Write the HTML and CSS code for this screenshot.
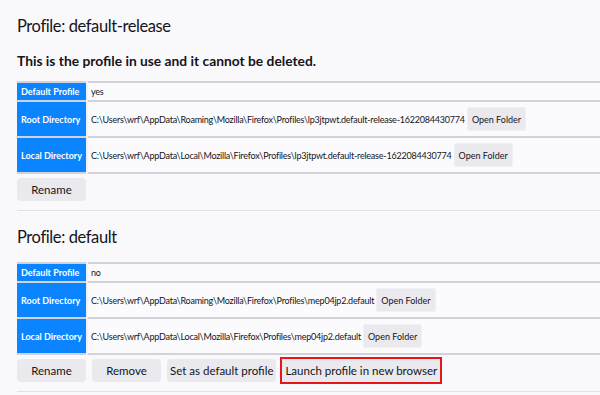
FILE: index.html
```html
<!DOCTYPE html>
<html lang="en">
<head>
  <meta charset="UTF-8">
  <title>About Profiles</title>
  <link rel="stylesheet" href="styles.css">
</head>
<body>
  <div class="profiles">
    <div class="profile">
      <h2>Profile: default-release</h2>
      <h3>This is the profile in use and it cannot be deleted.</h3>
      <table>
        <tr>
          <th>Default Profile</th>
          <td>yes</td>
        </tr>
        <tr class="dir-row">
          <th>Root Directory</th>
          <td>C:\Users\wrf\AppData\Roaming\Mozilla\Firefox\Profiles\lp3jtpwt.default-release-1622084430774 <button class="folder-button">Open Folder</button></td>
        </tr>
        <tr class="dir-row">
          <th>Local Directory</th>
          <td>C:\Users\wrf\AppData\Local\Mozilla\Firefox\Profiles\lp3jtpwt.default-release-1622084430774 <button class="folder-button">Open Folder</button></td>
        </tr>
      </table>
      <div class="actions">
        <button>Rename</button>
      </div>
    </div>
    <div class="profile">
      <h2>Profile: default</h2>
      <table>
        <tr>
          <th>Default Profile</th>
          <td>no</td>
        </tr>
        <tr class="dir-row">
          <th>Root Directory</th>
          <td>C:\Users\wrf\AppData\Roaming\Mozilla\Firefox\Profiles\mep04jp2.default <button class="folder-button">Open Folder</button></td>
        </tr>
        <tr class="dir-row">
          <th>Local Directory</th>
          <td>C:\Users\wrf\AppData\Local\Mozilla\Firefox\Profiles\mep04jp2.default <button class="folder-button">Open Folder</button></td>
        </tr>
      </table>
      <div class="actions">
        <button>Rename</button>
        <button>Remove</button>
        <button>Set as default profile</button>
        <button class="marked">Launch profile in new browser</button>
      </div>
    </div>
  </div>
</body>
</html>
```

FILE: styles.css
```css
html {
  overflow: hidden;
}
body {
  margin: 0;
  padding: 0 0 0 17px;
  background-color: #f9f9fb;
  color: #15141a;
  font-family: Lato, "Open Sans", sans-serif;
}
.profiles {
  width: 640px;
}
.profile {
  padding-top: 14px;
  padding-bottom: 9px;
  border-bottom: 1px solid #e0e0e6;
}
h2 {
  margin: 0 0 13px;
  font-size: 16.5px;
  font-weight: 400;
  letter-spacing: -0.4px;
  line-height: 24px;
}
h3 {
  margin: 0 0 10px;
  font-size: 13.8px;
  font-weight: 700;
  line-height: 20px;
}
table {
  width: 100%;
  border-collapse: collapse;
  border-top: 2px solid #d2d2d8;
  border-bottom: 2px solid #d2d2d8;
  font-size: 9px;
}
th, td {
  border-top: 2px solid #d2d2d8;
  line-height: 13px;
  padding: 2px 3px;
}
th {
  width: 1px;
  padding: 2px 4px;
  border-right: 2px solid #f0f0f8;
  background-color: #0a84ff;
  color: #fff;
  font-size: 9px;
  font-weight: 700;
  text-align: left;
  white-space: nowrap;
}
td {
  padding-left: 3px;
  background-color: #fbfbfe;
  letter-spacing: -0.22px;
  white-space: nowrap;
}
.dir-row td {
  padding-top: 5px;
  padding-bottom: 5px;
}
button {
  min-width: 69px;
  height: 23px;
  margin: 0;
  padding: 0 3px;
  border: none;
  border-radius: 4px;
  background-color: #e9e9ee;
  color: #15141a;
  font-family: inherit;
  font-size: 11.5px;
}
.folder-button {
  min-width: 0;
  height: 24px;
  padding: 0 4px;
  border: 1px solid #f0f0f8;
  border-radius: 2px;
  font-size: 9px;
  letter-spacing: 0;
}
.actions {
  display: flex;
  gap: 6px;
  margin-top: 4px;
}
.marked {
  outline: 2px solid #e8151b;
  outline-offset: 0;
  border-radius: 0;
}
```
